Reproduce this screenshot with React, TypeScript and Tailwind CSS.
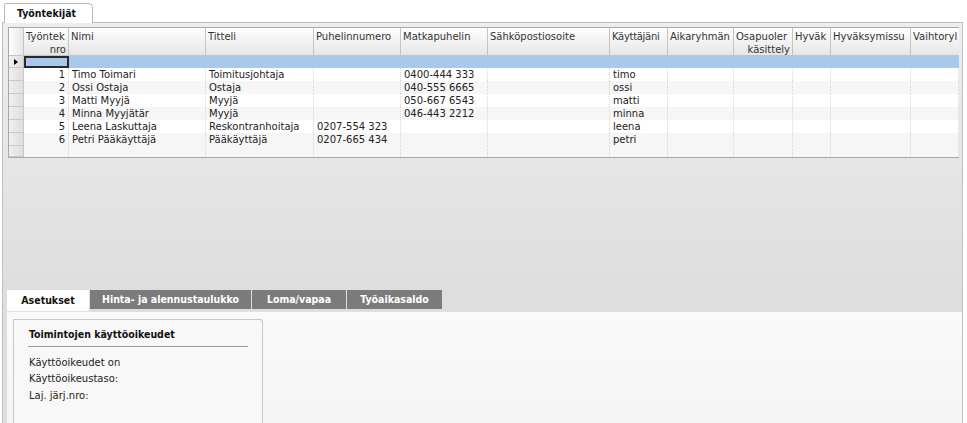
import React from 'react';

type Employee = {
  nro: number;
  name: string;
  title: string;
  phone: string;
  mobile: string;
  user: string;
};

const employees: Employee[] = [
  { nro: 1, name: 'Timo Toimari', title: 'Toimitusjohtaja', phone: '', mobile: '0400-444 333', user: 'timo' },
  { nro: 2, name: 'Ossi Ostaja', title: 'Ostaja', phone: '', mobile: '040-555 6665', user: 'ossi' },
  { nro: 3, name: 'Matti Myyjä', title: 'Myyjä', phone: '', mobile: '050-667 6543', user: 'matti' },
  { nro: 4, name: 'Minna Myyjätär', title: 'Myyjä', phone: '', mobile: '046-443 2212', user: 'minna' },
  { nro: 5, name: 'Leena Laskuttaja', title: 'Reskontranhoitaja', phone: '0207-554 323', mobile: '', user: 'leena' },
  { nro: 6, name: 'Petri Pääkäyttäjä', title: 'Pääkäyttäjä', phone: '0207-665 434', mobile: '', user: 'petri' },
];

// column widths in px, first is the row header
const cols = 'grid-cols-[15px_45px_137px_108px_87px_87px_122px_58px_66px_59px_38px_80px_48px]';

const font = { fontFamily: '"DejaVu Sans", Verdana, sans-serif' };
const boldFont = { fontFamily: '"DejaVu Sans Condensed", "DejaVu Sans", sans-serif' };

function HeaderCell({ children, className = '' }: { children?: React.ReactNode; className?: string }) {
  return (
    <div className={`h-[28px] px-[2px] pt-[2px] border-r border-b border-[#c4c4c4] bg-gradient-to-b from-white to-[#e6e6e6] text-[#333] leading-[13px] overflow-hidden whitespace-nowrap ${className}`}>
      {children}
    </div>
  );
}

function Cell({ children, className = '' }: { children?: React.ReactNode; className?: string }) {
  return (
    <div className={`h-[13px] px-[3px] border-r border-dotted border-[#d8d8d8] leading-[13px] overflow-hidden whitespace-nowrap ${className}`}>
      {children}
    </div>
  );
}

function RowHead({ children, h = 'h-[13px]' }: { children?: React.ReactNode; h?: string }) {
  return (
    <div className={`${h} border-r border-b border-[#c8c8c8] bg-gradient-to-r from-[#f0f0f0] to-[#dedede] flex items-center justify-center`}>
      {children}
    </div>
  );
}

export default function App() {
  const extraCols = 5; // columns after Käyttäjäni are empty

  return (
    <div className="w-[967px] h-[423px] bg-white overflow-hidden text-[10px] text-[#222]" style={font}>
      {/* top tab */}
      <div className="h-[22px] flex items-end pl-[4px]">
        <div className="h-[20px] w-[89px] border border-b-0 border-[#b8b8b8] rounded-tr-[5px] rounded-tl-[2px] bg-white flex items-center pl-[12px] font-bold text-[10.5px] text-[#111] relative top-[1px]" style={boldFont}>
          Työntekijät
        </div>
      </div>

      {/* upper gray panel with grid */}
      <div className="h-[268px] ml-[2px] mr-[4px] border border-b-0 border-[#c0c0c0] bg-gradient-to-b from-[#eeeeee] to-[#dedede] pt-[4px] pl-[5px]">
        <div className="w-[951px] border border-[#a8a8a8] bg-white">
          <div className={`grid ${cols}`}>
            {/* header */}
            <HeaderCell className="bg-gradient-to-r from-[#eaeaea] to-[#dadada]" />
            <HeaderCell>
              <div>Työntek</div>
              <div className="text-right">nro</div>
            </HeaderCell>
            <HeaderCell>Nimi</HeaderCell>
            <HeaderCell>Titteli</HeaderCell>
            <HeaderCell>Puhelinnumero</HeaderCell>
            <HeaderCell>Matkapuhelin</HeaderCell>
            <HeaderCell>Sähköpostiosoite</HeaderCell>
            <HeaderCell className="tracking-[-0.3px]">Käyttäjäni</HeaderCell>
            <HeaderCell>Aikaryhmän</HeaderCell>
            <HeaderCell>
              <div>Osapuoler</div>
              <div className="text-right">käsittely</div>
            </HeaderCell>
            <HeaderCell>Hyväk</HeaderCell>
            <HeaderCell>Hyväksymissu</HeaderCell>
            <HeaderCell className="border-r-0">Vaihtoryl</HeaderCell>

            {/* new row */}
            <RowHead h="h-[12px]">
              <span className="w-0 h-0 border-y-[3px] border-y-transparent border-l-[4px] border-l-black" />
            </RowHead>
            <div className="h-[12px] bg-[#a9c9ec] border-2 border-[#2a2a2a]" />
            {Array.from({ length: 11 }).map((_, i) => (
              <div key={i} className="h-[12px] bg-[#a9c9ec]" />
            ))}

            {/* data rows */}
            {employees.map((e, idx) => {
              const bg = idx % 2 === 0 ? 'bg-white' : 'bg-[#f6f6f6]';
              return (
                <React.Fragment key={e.nro}>
                  <RowHead />
                  <Cell className={`${bg} text-right`}>{e.nro}</Cell>
                  <Cell className={bg}>{e.name}</Cell>
                  <Cell className={bg}>{e.title}</Cell>
                  <Cell className={bg}>{e.phone}</Cell>
                  <Cell className={bg}>{e.mobile}</Cell>
                  <Cell className={bg} />
                  <Cell className={bg}>{e.user}</Cell>
                  {Array.from({ length: extraCols }).map((_, i) => (
                    <Cell key={i} className={bg} />
                  ))}
                </React.Fragment>
              );
            })}

            {/* empty row */}
            <RowHead h="h-[11px]" />
            {Array.from({ length: 12 }).map((_, i) => (
              <div key={i} className="h-[11px] bg-[#f6f6f6] border-r border-dotted border-[#d8d8d8]" />
            ))}
          </div>
        </div>
      </div>

      {/* lower tabs */}
      <div className="ml-[2px] mr-[4px] border-l border-r border-[#c0c0c0] bg-[#dedede] pl-[4px] h-[21px] flex items-start">
        <div className="h-[21px] w-[82px] bg-white flex items-center justify-center font-bold text-[10.5px] text-[#111]" style={boldFont}>
          Asetukset
        </div>
        {['Hinta- ja alennustaulukko', 'Loma/vapaa', 'Työaikasaldo'].map((t, i) => (
          <div
            key={t}
            className={`h-[19px] ml-[1px] bg-[#7b7b7b] flex items-center justify-center font-bold text-[10.5px] text-white ${i === 0 ? 'w-[161px]' : i === 1 ? 'w-[94px]' : 'w-[95px]'}`}
            style={boldFont}
          >
            {t}
          </div>
        ))}
      </div>

      {/* lower content */}
      <div className="h-[112px] ml-[2px] mr-[4px] border-l border-r border-[#c0c0c0] bg-[#dedede] pl-[4px]">
        <div className="h-full bg-gradient-to-b from-[#fafafa] to-[#f5f5f5] border-t border-[#e0e0e0] pt-[7px] pl-[6px]">
          <div className="w-[250px] h-full border border-b-0 border-[#c8c8c8] rounded-tr-[3px] bg-[#f8f8f8] pt-[7px] px-[14px]">
            <div className="font-bold text-[10.5px] text-[#111] pb-[3px] border-b border-[#9a9a9a] pl-[1px]" style={boldFont}>
              Toimintojen käyttöoikeudet
            </div>
            <div className="mt-[8px] leading-[16.5px] pl-[1px]">
              <div>Käyttöoikeudet on</div>
              <div>Käyttöoikeustaso:</div>
              <div>Laj. järj.nro:</div>
            </div>
          </div>
        </div>
      </div>
    </div>
  );
}
